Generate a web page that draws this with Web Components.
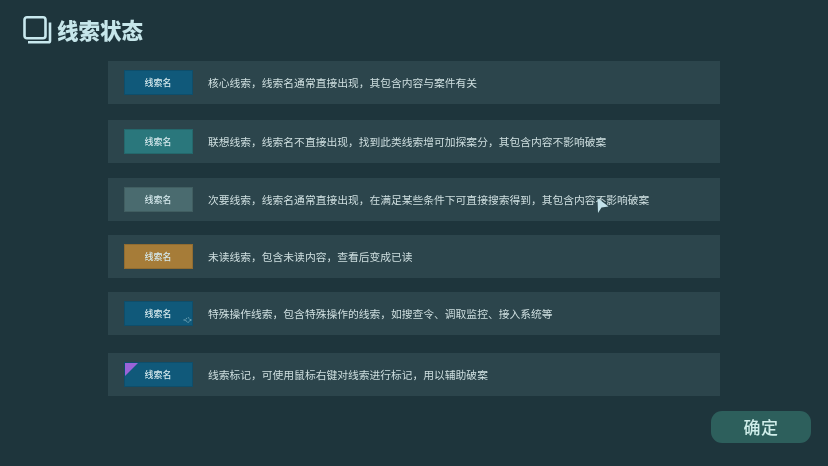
<!DOCTYPE html>
<html lang="zh"><head><meta charset="utf-8">
<style>
html,body{margin:0;height:100%;background:#1e353c}
body{font-family:"Noto Sans CJK SC","Noto Sans",sans-serif;overflow:hidden}
</style></head><body>
<clue-screen>
  <clue-row tag="#10597a" mt="0">核心线索，线索名通常直接出现，其包含内容与案件有关</clue-row>
  <clue-row tag="#2a777c" mt="16">联想线索，线索名不直接出现，找到此类线索增可加探案分，其包含内容不影响破案</clue-row>
  <clue-row tag="#4a6b6f" mt="15">次要线索，线索名通常直接出现，在满足某些条件下可直接搜索得到，其包含内容不影响破案</clue-row>
  <clue-row tag="#a67c38" mt="14">未读线索，包含未读内容，查看后变成已读</clue-row>
  <clue-row tag="#10597a" mt="14" mark="op">特殊操作线索，包含特殊操作的线索，如搜查令、调取监控、接入系统等</clue-row>
  <clue-row tag="#10597a" mt="18" mark="flag">线索标记，可使用鼠标右键对线索进行标记，用以辅助破案</clue-row>
</clue-screen>
<script>
class ClueScreen extends HTMLElement{
  constructor(){super();this.attachShadow({mode:'open'}).innerHTML=`<style>
  :host{display:flex;flex-direction:column;width:828px;height:466px;position:relative;box-sizing:border-box;padding:15px 0 0 23px;color:#c9e6e8;filter:blur(.35px)}
  header{display:flex;align-items:center;gap:5px;height:31px}
  h1{margin:0;font-size:21.5px;line-height:31px;font-weight:900;color:#c6e6ea;position:relative;top:-1px}
  .rows{display:flex;flex-direction:column;margin:15px 0 0 85px;width:612px}
  footer{display:flex;justify-content:flex-end;width:788px;margin-top:15px}
  button{width:100px;height:32px;border:0;border-radius:11px;background:#2d5f5c;color:#cfeeea;font:500 17px/32px "Noto Sans CJK SC",sans-serif;padding:0;letter-spacing:.5px}
  svg{display:block}
  .cursor{position:absolute;left:596px;top:198px}
  </style>
  <header>
    <svg width="29" height="30" viewBox="0 0 29 30" fill="none">
      <rect x="1.5" y="1.3" width="21" height="21" rx="2.5" stroke="#c8e8ee" stroke-width="2.6"/>
      <path d="M5 26.3H25.5Q27 26.3 27 24.7V6.5" stroke="#c8e8ee" stroke-width="2.6"/>
    </svg>
    <h1>线索状态</h1>
  </header>
  <div class="rows"><slot></slot></div>
  <footer><button>确定</button></footer>
  <svg class="cursor" width="14" height="16" viewBox="0 0 14 16"><path d="M1.5 0 12.5 8.5 5.5 9.5 2 15Z" fill="#c3e2ea"/></svg>`}
}
class ClueRow extends HTMLElement{
  constructor(){super();
    const s=this.attachShadow({mode:'open'});
    s.innerHTML=`<style>
    :host{display:flex;align-items:center;gap:16px;height:43px;box-sizing:border-box;padding:0 0 0 15.5px;background:#2c454c;font-size:10.78px;color:#cfdfe0;flex:none}
    .text{white-space:nowrap;position:relative;top:-.5px;margin-left:-.5px}
    .tag{flex:none;position:relative;width:69px;height:25px;box-sizing:border-box;display:flex;align-items:center;justify-content:center;font-size:9px;font-weight:500;color:#d4e8ec;box-shadow:inset 0 0 0 1px rgba(0,0,0,.12);overflow:hidden}
    .flag{position:absolute;left:1px;top:1px}
    .op{position:absolute;right:1px;bottom:2px;opacity:.8}
    </style><div class="tag"><span>线索名</span><span id="m"></span></div><div class="text"><slot></slot></div>`;
  }
  connectedCallback(){
    const s=this.shadowRoot;
    s.querySelector('.tag').style.background=this.getAttribute('tag');
    this.style.marginTop=this.getAttribute('mt')+'px';
    const k=this.getAttribute('mark');
    if(k==='flag')s.getElementById('m').innerHTML='<svg class="flag" width="13" height="13" viewBox="0 0 13 13"><path d="M0 0H13L0 13Z" fill="#9a63d8"/></svg>';
    if(k==='op')s.getElementById('m').innerHTML='<svg class="op" width="9" height="8" viewBox="0 0 9 8" fill="none" stroke="#a9cfd8" stroke-width=".9"><circle cx="5" cy="4" r="2.2" stroke-dasharray="1.4 .9"/><path d="M0.5 4H2.5M7.2 4H8.6"/></svg>';
  }
}
customElements.define('clue-row',ClueRow);
customElements.define('clue-screen',ClueScreen);
</script>
</body></html>
